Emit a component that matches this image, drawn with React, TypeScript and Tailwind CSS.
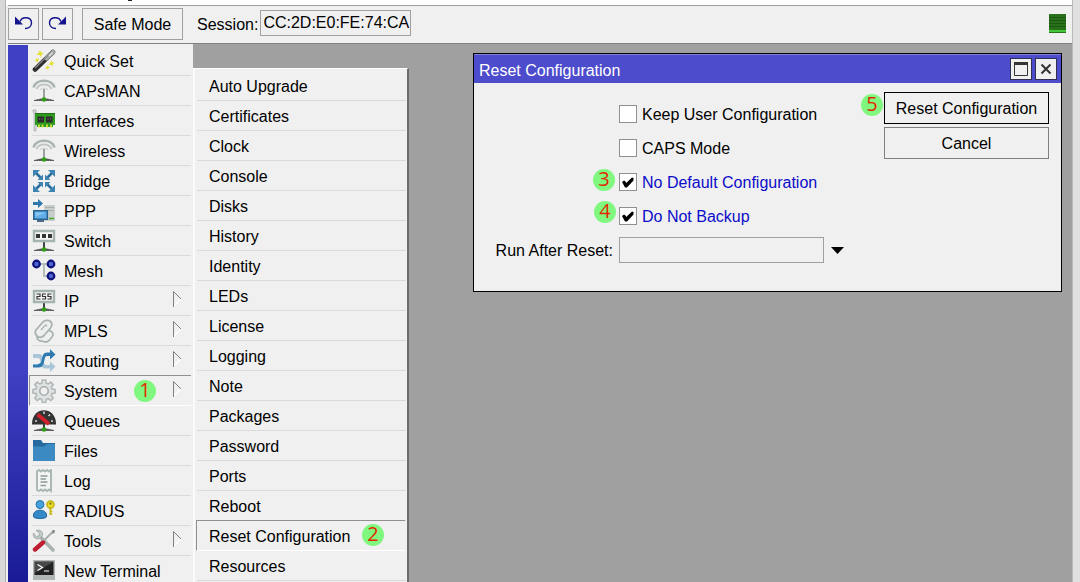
import type { ReactNode } from "react";

function Icon({ children }: { children: ReactNode }) {
  return (
    <svg viewBox="0 0 24 24" className="h-6 w-6 shrink-0" fill="none" aria-hidden="true">
      {children}
    </svg>
  );
}

function Stand() {
  return (
    <>
      <path d="M12 13v7" stroke="#444" strokeWidth="2" />
      <path d="M2 21.500l7-1.500h6l7 1.500z" fill="#444" stroke="#555" strokeWidth=".8" />
      <circle cx="12" cy="20.500" r="2.300" fill="#2f9e12" />
    </>
  );
}

function WandIcon() {
  return (
    <Icon>
      <path
        d="M8 1l1 2.600 3 .4-2.400 1.500L9 8.500 7.500 6 4.500 6l2-2zM19.500 11.500l.8 2 2.700.4-2.300 1.300-.2 2.600-1.500-2-2.500.2 1.500-1.800zM5 8.500l.7 1.600 2 .3-1.600 1-.1 2-1.200-1.200-2 .2 1.200-1.600zM15.500 16l.6 1.600 2 .3-1.600 1-.1 2-1.200-1.200-2 .2 1.200-1.600z"
        fill="#e5df2e"
      />
      <path d="M3 20.500L21 3" stroke="#2e2e2e" strokeWidth="4.600" strokeLinecap="round" />
      <path d="M14.500 9.300L21 3" stroke="#a3a8a8" strokeWidth="4.400" strokeLinecap="round" />
      <path d="M3 19L20 2.500" stroke="#8b8b8b" strokeWidth="1.200" />
      <path d="M17 7l3.500-3.500" stroke="#e3e5e5" strokeWidth="1.500" />
    </Icon>
  );
}

function AntennaIcon() {
  return (
    <Icon>
      <path d="M1.500 8.500C4 -.5 20 -.5 22.500 8.500" stroke="#a9b4b0" strokeWidth="2.600" />
      <path d="M4.500 10C7 4 17 4 19.500 10" stroke="#c0c8c5" strokeWidth="2.200" />
      <path d="M8 11c1.500-2.500 6.500-2.500 8 0" stroke="#d4d9d7" strokeWidth="1.500" />
      <path d="M12 10v10" stroke="#7f8886" strokeWidth="1.500" />
      <path d="M2 21.500l7-1.500h6l7 1.500z" fill="#444" stroke="#555" strokeWidth=".8" />
      <circle cx="12" cy="20.500" r="2.300" fill="#2f9e12" />
    </Icon>
  );
}

function CardIcon() {
  return (
    <Icon>
      <path d="M1 1h3v21H2V3H1z" fill="#d2d8d6" stroke="#a7b0ad" strokeWidth=".8" />
      <path d="M3 5h20v11h-2v2H5v-2H3z" fill="#2e9a1d" />
      <path d="M7 15.500v3M10.500 15.500v3M15 15.500v3M19 15.500v3" stroke="#d3df3a" strokeWidth="1.800" />
      <path d="M5.500 7.500h6.500v6H5.500zM14 7.500h6.500v6H14z" fill="#2b2b2b" />
      <path d="M7.500 9v2M10 9v2M16 9v2M18.500 9v2" stroke="#5a5a5a" />
      <path d="M3 4.500h20" stroke="#1d7411" />
    </Icon>
  );
}

function BridgeIcon() {
  return (
    <Icon>
      <path d="M4 4l5.500 5.500M20 4l-5.500 5.500M4 20l5.500-5.500M20 20l-5.500-5.500" stroke="#2f6f9c" strokeWidth="2.600" />
      <path
        d="M1 1h7L5.500 3.500 3.500 5.500 1 8zM23 1h-7l2.500 2.500 2 2L23 8zM1 23h7l-2.500-2.500-2-2L1 16zM23 23h-7l2.500-2.500 2-2L23 16z"
        fill="#3f85b4"
      />
      <path
        d="M11 11H5.500L8 8.500l.5-.5L11 5.500zM13 11h5.500L16 8.500l-.5-.5L13 5.500zM11 13H5.500L8 15.500l.5.500L11 18.500zM13 13h5.500L16 15.500l-.5.500L13 18.500z"
        fill="#3f85b4"
      />
    </Icon>
  );
}

function PppIcon() {
  return (
    <Icon>
      <path d="M12 6h11v16H12z" fill="#c9cecd" />
      <path d="M13 8.500h9M13 11.500h9" stroke="#a9afad" />
      <path d="M17 19.500h5" stroke="#42a52c" strokeWidth="1.500" />
      <path d="M1 3h5V0l5 4.500L6 9V6H1z" fill="#2d78aa" />
      <path d="M1.800 11.800h13.500v8.500H1.800z" fill="#61aee8" stroke="#286392" strokeWidth="1.600" />
      <path d="M3.500 13.500h10l-10 4z" fill="#8cc7f2" />
      <path d="M5 22h7" stroke="#4b6b86" strokeWidth="2" />
    </Icon>
  );
}

function SwitchIcon() {
  return (
    <Icon>
      <Stand />
      <path d="M2 2h20v10H2z" fill="#f4f5f5" stroke="#a5b3ae" strokeWidth="2.400" />
      <path d="M4 5h4v4H4zM10 5h4v4h-4zM16 5h4v4h-4z" fill="#333" />
    </Icon>
  );
}

function MeshIcon() {
  return (
    <Icon>
      <path d="M5 5h14M12 5v12h7" stroke="#b5bdbb" strokeWidth="2" />
      <g fill="#4a68d0" stroke="#10107c" strokeWidth="2.200">
        <circle cx="4.500" cy="5" r="3.300" />
        <circle cx="19" cy="5" r="3.300" />
        <circle cx="19" cy="17" r="3.300" />
      </g>
    </Icon>
  );
}

function IpIcon() {
  return (
    <Icon>
      <Stand />
      <path d="M2 2h20v11H2z" fill="#f4f5f5" stroke="#a5b3ae" strokeWidth="2.400" />
      <path
        d="M4.500 5H8v2.500H5V10h3.500M14 5h-3.500v2.500h3V10H10M19.500 5H16v2.500h3V10h-3.500"
        stroke="#333"
        strokeWidth="1.200"
      />
    </Icon>
  );
}

function MplsIcon() {
  return (
    <Icon>
      <g stroke="#a9b3b0" strokeWidth="1.800" fill="#eef0f0">
        <path d="M10 22c-3 .5-6-2-4.500-5.500l5-7 8 2.500c3 1.500 3 4 1.500 6l-3 3.500c-2 2-5 1.500-7 .5z" />
        <path d="M4 11l6-7c2-3 6-3.500 8.500-1.500 2 2 1.500 4.500 0 6.500L12 16.500c-2 2-5 2.500-7 .5-1.800-1.700-2.200-4-1-6z" />
        <path d="M9 11l4-4.500c1-1 2-.5 1.500 1" strokeWidth="1.200" />
      </g>
    </Icon>
  );
}

function RoutingIcon() {
  return (
    <Icon>
      <path d="M1 5h6c6 0 3 11 8 11h3v-3.500l5.500 5L18 23v-3.500h-5C7 19.500 10 9 6 9H1z" fill="#a9c6d9" />
      <path d="M1 15h5c6 0 2-11.500 9-11.500h3V0l5.500 5.500L18 10.500V7h-3c-4 0-1 11.500-8 11.500H1z" fill="#2f7bb0" />
      <path d="M1 15.500h5" stroke="#6fb0dc" />
    </Icon>
  );
}

function GearIcon() {
  return (
    <Icon>
      <path
        d="M10.300 1h3.400l.5 3.200 2 .8 2.600-1.900 2.400 2.400-1.900 2.600.8 2 3 .5v3.400l-3 .5-.8 2 1.900 2.600-2.400 2.400-2.600-1.900-2 .8-.5 3h-3.400l-.5-3-2-.8-2.600 1.900-2.400-2.400 1.900-2.600-.8-2-3-.5v-3.400l3-.5.8-2-1.900-2.600 2.400-2.400L7.800 5l2-.8z"
        fill="#dfe2e2"
        stroke="#b0b6b5"
        strokeWidth="1.500"
      />
      <circle cx="12" cy="12" r="4.200" fill="#f0f0f0" stroke="#a7adac" strokeWidth="1.600" />
    </Icon>
  );
}

function GaugeIcon() {
  return (
    <Icon>
      <Stand />
      <path d="M0 15.500C-.5-3.500 24.500-3.500 24 15.500z" fill="#333" />
      <path d="M3 12h2M19 12h2M18 5.500L16.500 7M12 2.500V5" stroke="#d8d8d8" strokeWidth="1.500" />
      <path d="M5.500 5.500L17 15" stroke="#d1202a" strokeWidth="3.800" />
    </Icon>
  );
}

function FolderIcon() {
  return (
    <Icon>
      <path d="M1 1h8l2 3h12v18H1z" fill="#256a9e" />
      <path d="M1 7.500h11L15 5h8v17H1z" fill="#3c8ac2" />
    </Icon>
  );
}

function LogIcon() {
  return (
    <Icon>
      <path
        d="M5 2l2-1 2 1.500L11 1l2 1.500L15 1l2 1.500L19 1v21l-2-1.500L15 22l-2-1.500L11 22l-2-1.500L7 22l-2-1z"
        fill="#f3f5f4"
        stroke="#a9b5b1"
        strokeWidth="1.900"
      />
      <path d="M8.500 7h7M8.500 10h5.500M8.500 13h7M8.500 16.500h5.500" stroke="#8f9b98" strokeWidth="1.500" />
    </Icon>
  );
}

function RadiusIcon() {
  return (
    <Icon>
      <circle cx="8" cy="5.500" r="4" fill="#45a0de" stroke="#2674ac" />
      <path d="M1.500 16c0-6.500 13-6.500 13 0v2c-2 2-11 2-13 0z" fill="#3388c6" stroke="#236ca2" />
      <path d="M18.500 9v7" stroke="#c6ba14" strokeWidth="2" />
      <path d="M18.500 12.500h2M18.500 15h2" stroke="#c6ba14" strokeWidth="1.200" />
      <circle cx="18.500" cy="5.500" r="3.600" fill="#e8dc24" stroke="#b9ad0b" strokeWidth="1.300" />
      <circle cx="18.500" cy="4.500" r="1.200" fill="#888128" />
    </Icon>
  );
}

function ToolsIcon() {
  return (
    <Icon>
      <path d="M22 1.500L10.500 13" stroke="#a4adab" strokeWidth="1.800" />
      <path d="M20 1.500L23 1l-.5 3-2 1z" fill="#858e8c" />
      <path d="M8 7.500l13 13.500" stroke="#a9b4b1" strokeWidth="3.600" strokeLinecap="round" />
      <path
        d="M4 1.500l3.500 3-.5 2.500-2.500.5-3-3.500C0 8 4 11 7.500 9.500l3-3C11.500 3 8 0 4 1.500z"
        fill="#c2cac8"
        stroke="#949e9b"
        strokeWidth=".7"
      />
      <path d="M3 20.500l8-7" stroke="#bd2030" strokeWidth="4.400" strokeLinecap="round" />
    </Icon>
  );
}

function TerminalIcon() {
  return (
    <Icon>
      <path d="M1 1h22v20H1z" fill="#b2b5b5" />
      <path d="M2.500 2.500h19V16h-19z" fill="#222" />
      <path d="M3 3h18L3 14z" fill="#484848" />
      <path d="M5.500 5.500l5 3-5 3M12 12h5" stroke="#fff" strokeWidth="1.200" />
    </Icon>
  );
}

const mainMenu = [
  { label: "Quick Set", icon: <WandIcon /> },
  { label: "CAPsMAN", icon: <AntennaIcon /> },
  { label: "Interfaces", icon: <CardIcon /> },
  { label: "Wireless", icon: <AntennaIcon /> },
  { label: "Bridge", icon: <BridgeIcon /> },
  { label: "PPP", icon: <PppIcon /> },
  { label: "Switch", icon: <SwitchIcon /> },
  { label: "Mesh", icon: <MeshIcon /> },
  { label: "IP", icon: <IpIcon />, more: true },
  { label: "MPLS", icon: <MplsIcon />, more: true },
  { label: "Routing", icon: <RoutingIcon />, more: true },
  { label: "System", icon: <GearIcon />, more: true, step: "1" },
  { label: "Queues", icon: <GaugeIcon /> },
  { label: "Files", icon: <FolderIcon /> },
  { label: "Log", icon: <LogIcon /> },
  { label: "RADIUS", icon: <RadiusIcon /> },
  { label: "Tools", icon: <ToolsIcon />, more: true },
  { label: "New Terminal", icon: <TerminalIcon /> },
];

const systemMenu = [
  "Auto Upgrade",
  "Certificates",
  "Clock",
  "Console",
  "Disks",
  "History",
  "Identity",
  "LEDs",
  "License",
  "Logging",
  "Note",
  "Packages",
  "Password",
  "Ports",
  "Reboot",
  "Reset Configuration",
  "Resources",
];

const options = [
  { id: "keep-user", label: "Keep User Configuration", checked: false },
  { id: "caps-mode", label: "CAPS Mode", checked: false },
  { id: "no-default", label: "No Default Configuration", checked: true, step: "3", place: "left-[119px] top-1" },
  { id: "no-backup", label: "Do Not Backup", checked: true, step: "4", place: "left-[120px] top-0.5" },
];

function Step({ n, className = "" }: { n: string; className?: string }) {
  return (
    <span
      className={`flex h-[22px] w-[22px] items-center justify-center rounded-full bg-[#80f880] pb-0.5 font-['Open_Sans',sans-serif] text-[20px] leading-5 text-[#e02800] ${className}`}
    >
      {n}
    </span>
  );
}

function Toolbar() {
  return (
    <header className="flex h-[39px] shrink-0 items-start border-t border-b border-t-[#a0a0a0] border-b-[#808080] bg-[#f0f0f0] pt-0.5 pr-1.5">
      <button type="button" aria-label="Undo" className="flex h-8 w-[31px] items-center justify-center border border-[#a0a0a0]">
        <svg viewBox="0 0 20 20" className="h-5 w-5" fill="none">
          <path d="M1 2.500v8h8z" fill="#14148c" />
          <path d="M6 7.500C8 2 17.500 2.500 17.500 9c0 3-2.500 5.500-6.500 5.500" stroke="#14148c" strokeWidth="1.400" />
        </svg>
      </button>
      <button type="button" aria-label="Redo" className="ml-[3px] flex h-8 w-[31px] items-center justify-center border border-[#a0a0a0]">
        <svg viewBox="0 0 20 20" className="h-5 w-5" fill="none">
          <path d="M18 2.500v8h-8z" fill="#14148c" />
          <path d="M13 7.500C11 2 1.500 2.500 1.500 9c0 3 2.500 5.500 6.500 5.500" stroke="#14148c" strokeWidth="1.400" />
        </svg>
      </button>
      <button type="button" className="ml-[9px] h-8 w-[101px] border border-[#a0a0a0] pt-0.5">
        Safe Mode
      </button>
      <label htmlFor="session" className="ml-3.5 pt-px leading-8">
        Session:
      </label>
      <input
        id="session"
        readOnly
        defaultValue="CC:2D:E0:FE:74:CA"
        className="mt-0.5 ml-0.5 h-[26px] w-[151px] border border-[#a0a0a0] bg-[#f0f0f0] pl-0.5 outline-none"
      />
      <svg viewBox="0 0 17 19" className="mt-1.5 ml-auto h-[19px] w-[17px]" aria-label="CPU load">
        <path d="M0 0h17v19H0z" fill="#28701a" />
        <path d="M0 3.500h17M0 6.500h17M0 9.500h17M0 12.500h17" stroke="#1d5812" />
        <path d="M0 16h17v2H0z" fill="#44c83a" />
      </svg>
    </header>
  );
}

function MainMenu() {
  return (
    <nav className="w-[165px] shrink-0 bg-[#f0f0f0] pt-0.5 pr-0.5 pl-1">
      {mainMenu.map((item) => (
        <button
          key={item.label}
          type="button"
          className={`relative flex items-center gap-2 border-b text-left ${
            item.step
              ? "-mt-px -ml-[3px] h-[31px] w-[162px] border-t border-l border-t-[#909090] border-b-white border-l-[#909090] pl-0.5"
              : "h-[30px] w-full border-b-[#dadada]"
          }`}
        >
          {item.icon}
          <span className="pt-0.5">{item.label}</span>
          {item.step && <Step n={item.step} className="absolute top-1 left-[104px]" />}
          {item.more && (
            <svg viewBox="0 0 10 18" className="absolute top-1 right-[9px] h-[18px] w-2.5" fill="none">
              <path d="M1 16.500L9 9" stroke="#fff" strokeWidth="1.500" />
              <path d="M1.500 17V1.500L9 9" stroke="#808080" />
            </svg>
          )}
        </button>
      ))}
    </nav>
  );
}

function SystemMenu() {
  return (
    <nav className="mt-6 w-[216px] shrink-0 border-t border-r-2 border-l-2 border-t-white border-r-[#6c6c6c] border-l-[#fafafa] bg-[#f0f0f0] pt-0.5 pr-px pl-0.5">
      {systemMenu.map((label) => (
        <button
          key={label}
          type="button"
          className={`relative flex w-full items-center border-b pt-0.5 pl-3 text-left ${
            label === "Reset Configuration"
              ? "-mt-px -ml-px h-[31px] border-t border-l border-t-[#909090] border-b-white border-l-[#909090]"
              : "h-[30px] border-b-[#dadada]"
          }`}
        >
          {label}
          {label === "Reset Configuration" && <Step n="2" className="absolute top-[3px] left-[165px]" />}
        </button>
      ))}
    </nav>
  );
}

function ResetDialog() {
  return (
    <section
      role="dialog"
      aria-labelledby="dialog-title"
      className="absolute top-[9px] right-2.5 w-[589px] border border-black bg-[#f0f0f0]"
    >
      <div className="flex h-[29px] items-center gap-[3px] border-t border-t-[#8080dc] bg-[#4c4ccc] pr-1 pl-[5px]">
        <h1 id="dialog-title" className="mr-auto pt-1 text-white">
          Reset Configuration
        </h1>
        <button type="button" aria-label="Maximize" className="flex h-[22px] w-[22px] items-center justify-center border border-[#303050] bg-[#f0f0f0]">
          <svg viewBox="0 0 14 14" className="h-3.5 w-3.5" fill="none">
            <path d="M.5 .5h13v13H.5z" stroke="#333" />
            <path d="M0 0h14v3H0z" fill="#333" />
          </svg>
        </button>
        <button type="button" aria-label="Close" className="flex h-[22px] w-[22px] items-center justify-center border border-[#303050] bg-[#f0f0f0]">
          <svg viewBox="0 0 12 12" className="h-3 w-3" fill="none">
            <path d="M1.500 1.500l9 9M10.500 1.500l-9 9" stroke="#333" strokeWidth="2" />
          </svg>
        </button>
      </div>
      <form className="flex items-start justify-between pr-3">
        <div className="pt-3.5 pb-6">
          {options.map((option) => (
            <div key={option.id} className="relative flex h-[34px] items-center pl-[145px]">
              {option.step && <Step n={option.step} className={`absolute ${option.place}`} />}
              <span className="grid">
                <input
                  id={option.id}
                  type="checkbox"
                  defaultChecked={option.checked}
                  className="peer col-start-1 row-start-1 h-[18px] w-[18px] appearance-none border border-[#909090] bg-white"
                />
                <svg
                  viewBox="0 0 18 18"
                  className="pointer-events-none invisible col-start-1 row-start-1 h-[18px] w-[18px] peer-checked:visible"
                >
                  <path d="M3 9l2-1.500 1.500 1 .7 1.500L13 4.500 14.500 5v2.500L8 14.500H6z" fill="#000" />
                </svg>
              </span>
              <label htmlFor={option.id} className={`pt-0.5 pl-[5px] ${option.checked ? "text-[#0c0cc8]" : ""}`}>
                {option.label}
              </label>
            </div>
          ))}
          <div className="flex h-[34px] items-center">
            <label htmlFor="run-after" className="w-[139px] pt-0.5 text-right">
              Run After Reset:
            </label>
            <select id="run-after" className="ml-1.5 h-[26px] w-[205px] appearance-none border border-[#a0a0a0] bg-[#f0f0f0]">
              <option value=""></option>
            </select>
            <svg viewBox="0 0 13 7" className="ml-[7px] h-[7px] w-[13px]" aria-hidden="true">
              <path d="M0 0h13L6.500 7z" fill="#000" />
            </svg>
          </div>
        </div>
        <div className="relative flex w-[165px] flex-col gap-[3px] pt-[9px]">
          <Step n="5" className="absolute top-[11px] -left-[23px]" />
          <button type="submit" className="h-8 border border-black pt-0.5">
            Reset Configuration
          </button>
          <button type="button" className="h-8 border border-[#808080] pt-0.5">
            Cancel
          </button>
        </div>
      </form>
    </section>
  );
}

export default function App() {
  return (
    <div className="flex h-screen overflow-hidden bg-[#e0e0e0] font-['Liberation_Sans',Arial,sans-serif] text-base leading-5 text-black">
      <div className="w-1.5 shrink-0 border-r border-r-[#b0b0b0] bg-[#d8d8d8]" />
      <div className="flex min-w-0 flex-1 flex-col bg-[#f0f0f0] pl-0.5">
        <div className="-ml-0.5 h-[5px] shrink-0 bg-white pl-[122px]">
          <div className="h-px w-1 bg-[#222]" />
        </div>
        <Toolbar />
        <div className="relative flex min-h-0 flex-1 bg-[#a0a0a0]">
          <div className="w-5 shrink-0 border-t border-t-[#f0f0f0] bg-linear-to-b from-[#4040c4] from-60% to-[#1a1a96]" />
          <MainMenu />
          <SystemMenu />
          <ResetDialog />
        </div>
      </div>
      <div className="w-2 shrink-0 border-l border-l-[#b8b8b8] bg-[#e0e0e0]" />
    </div>
  );
}
